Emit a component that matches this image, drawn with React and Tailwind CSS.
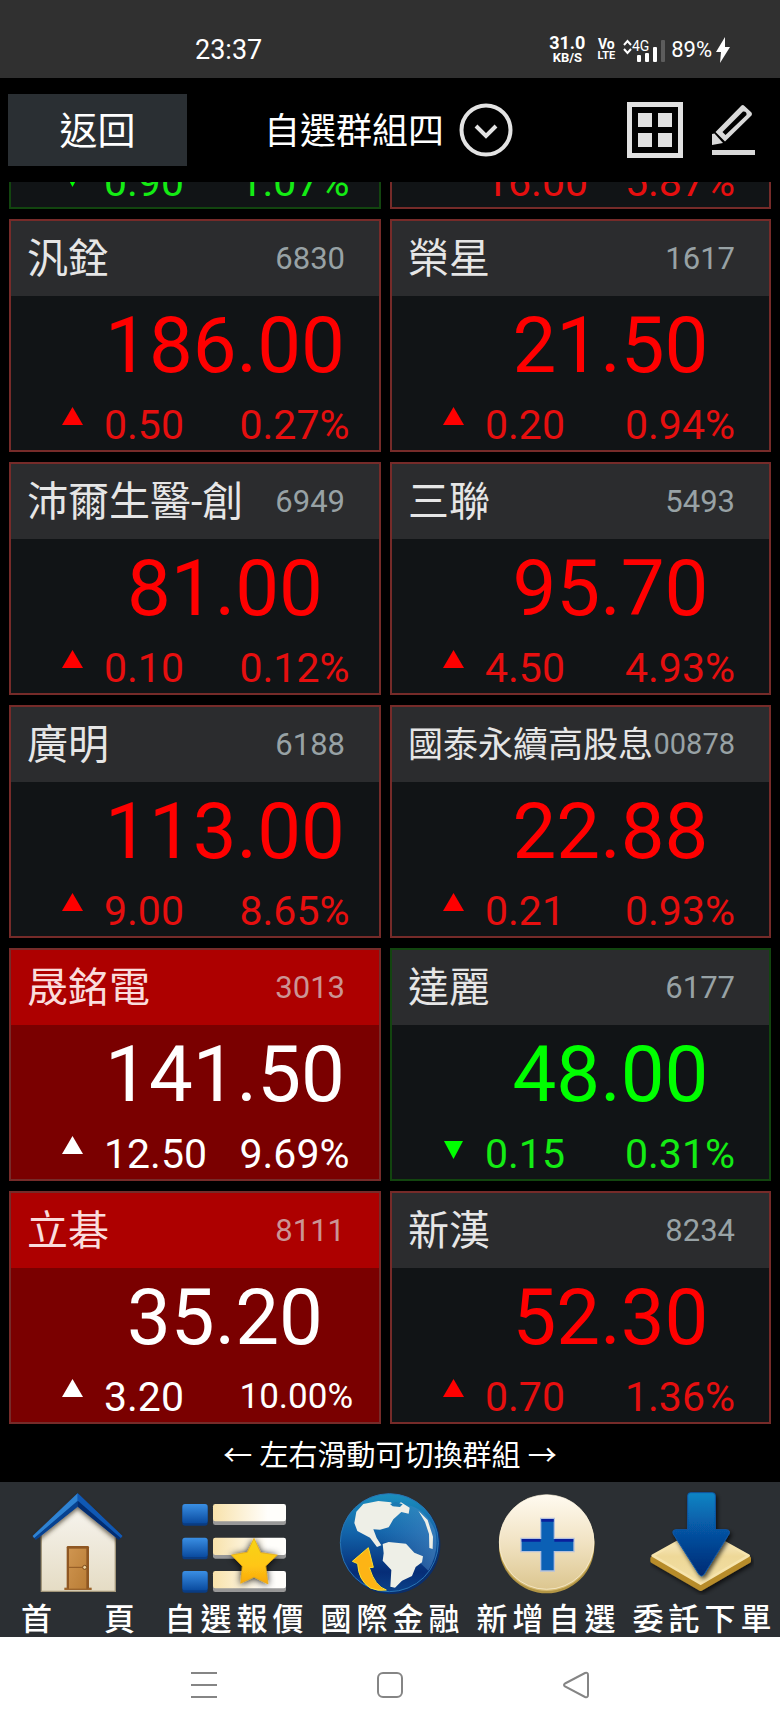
import React, { useState } from "react";
import clsx from "clsx";

// the first row is scrolled half under the header, so only its last line shows
const quotes = [
  { id: "scrolled-left", name: "", code: "", price: "", change: "0.90", percent: "1.07%", trend: "down" },
  { id: "scrolled-right", name: "", code: "", price: "", change: "16.00", percent: "5.87%", trend: "up" },
  { id: "6830", name: "汎銓", code: "6830", price: "186.00", change: "0.50", percent: "0.27%", trend: "up" },
  { id: "1617", name: "榮星", code: "1617", price: "21.50", change: "0.20", percent: "0.94%", trend: "up" },
  { id: "6949", name: "沛爾生醫-創", code: "6949", price: "81.00", change: "0.10", percent: "0.12%", trend: "up" },
  { id: "5493", name: "三聯", code: "5493", price: "95.70", change: "4.50", percent: "4.93%", trend: "up" },
  { id: "6188", name: "廣明", code: "6188", price: "113.00", change: "9.00", percent: "8.65%", trend: "up" },
  { id: "00878", name: "國泰永續高股息", code: "00878", price: "22.88", change: "0.21", percent: "0.93%", trend: "up" },
  { id: "3013", name: "晟銘電", code: "3013", price: "141.50", change: "12.50", percent: "9.69%", trend: "limit" },
  { id: "6177", name: "達麗", code: "6177", price: "48.00", change: "0.15", percent: "0.31%", trend: "down" },
  { id: "8111", name: "立碁", code: "8111", price: "35.20", change: "3.20", percent: "10.00%", trend: "limit" },
  { id: "8234", name: "新漢", code: "8234", price: "52.30", change: "0.70", percent: "1.36%", trend: "up" },
];

const trendStyles = {
  up: {
    card: "border-[#762b29] bg-[#111416]",
    head: "bg-[#2b2c2e]",
    name: "text-[#e6e6e6]",
    code: "text-[#98a2a5]",
    price: "text-[#ff0000]",
    change: "text-[#e60f0f]",
  },
  down: {
    card: "border-[#12450f] bg-[#111416]",
    head: "bg-[#2b2c2e]",
    name: "text-[#e6e6e6]",
    code: "text-[#98a2a5]",
    price: "text-[#00ff00]",
    change: "text-[#14ec14]",
  },
  limit: {
    card: "border-[#762b29] bg-[#7a0000]",
    head: "bg-[#ad0000]",
    name: "text-[#fadcdc]",
    code: "text-[#cb9494]",
    price: "text-white",
    change: "text-white",
  },
};

const Arrow = ({ down, className }) => (
  <svg viewBox="0 0 21 24" className={clsx("w-[21px] h-6", className)} fill="currentColor" aria-hidden="true">
    {down ? <path d="M1 5h19L10.5 23z" /> : <path d="M0 18h21L10.5 0z" />}
  </svg>
);

const QuoteCard = ({ quote }) => {
  const s = trendStyles[quote.trend];
  const longName = quote.name.length > 6;

  return (
    <article className={clsx("h-[233px] border-2", s.card)}>
      <div className={clsx("flex h-[75px] items-center justify-between pl-4 pr-[34px] whitespace-nowrap", s.head)}>
        <h2 className={clsx(longName ? "text-[35px]" : "text-[41px]", "pt-[2px] leading-none", s.name)}>{quote.name}</h2>
        <span className={clsx(longName ? "text-[29px]" : "text-[31px]", "leading-none", s.code)}>{quote.code}</span>
      </div>
      <p className={clsx("h-[104px] pl-[60px] text-center text-[78px] leading-[100px]", s.price)}>{quote.price}</p>
      <div className={clsx("grid h-[50px] grid-cols-[21px_1fr_1fr] items-center pl-[51px] pr-[7px]", s.change)}>
        <Arrow down={quote.trend === "down"} className={clsx("mt-[7px] self-start", s.price)} />
        <span className="pl-[21px] text-[41px] leading-[50px]">{quote.change}</span>
        <span className={clsx("pl-3 leading-[50px]", quote.percent.length > 5 ? "text-[35px]" : "text-[41px]")}>
          {quote.percent}
        </span>
      </div>
    </article>
  );
};

const StatusBar = () => (
  <div className="flex h-[78px] items-center justify-between bg-[#303030] pl-[25%] pr-[50px] pt-[22px] text-white">
    <time className="text-[27px] leading-7">23:37</time>
    <div className="flex items-center">
      <div className="flex flex-col items-center font-bold">
        <span className="text-[18px] leading-4">31.0</span>
        <span className="text-[13px] leading-[14px]">KB/S</span>
      </div>
      <div className="ml-3 flex flex-col items-center font-bold">
        <span className="text-[14px] leading-3">Vo</span>
        <span className="text-[11px] leading-3">LTE</span>
      </div>
      <svg viewBox="0 0 42 26" className="ml-2 h-[26px] w-[42px]" fill="#fff" aria-hidden="true">
        <path d="M1 8l3.5-4L8 8M1 12l3.5 4L8 12" fill="none" stroke="#fff" strokeWidth="2" />
        <text x="9" y="14" fontSize="14" fontFamily="Roboto">4G</text>
        <rect x="14" y="18" width="4" height="7" rx="1" />
        <rect x="22" y="16" width="4" height="9" rx="1" />
        <rect x="30" y="10" width="4" height="15" rx="1" />
        <rect x="38" y="3" width="4" height="22" rx="1" fill="#5c5c5c" />
      </svg>
      <span className="ml-[6px] text-[22px] leading-6">89%</span>
      <svg viewBox="0 0 14 26" className="ml-1 h-[26px] w-[14px]" fill="#fff" aria-hidden="true">
        <path d="M9 0L0 15h5L4 26l10-16H9z" />
      </svg>
    </div>
  </div>
);

const Header = ({ onToggle, open }) => (
  <header className="flex items-center bg-black py-4 pl-2 pr-[25px] text-white">
    <button type="button" className="h-[72px] w-[179px] bg-[#2a2f33] pt-[2px] text-[38px] leading-none">
      返回
    </button>
    <button
      type="button"
      className="ml-[77px] flex items-center gap-[15px] text-[36px] leading-none"
      onClick={onToggle}
      aria-expanded={open}
    >
      <span className="pt-1">自選群組四</span>
      <svg viewBox="0 0 54 54" className="h-[54px] w-[54px]" fill="none" stroke="#e3e3e3" strokeWidth="4" aria-hidden="true">
        <circle cx="27" cy="27" r="24.5" />
        <path d="M17 23l10 10 10-10" />
      </svg>
    </button>
    <div className="ml-auto flex items-center gap-7">
      <button type="button" aria-label="版面">
        <svg viewBox="0 0 56 56" className="block h-[56px] w-[56px]" fill="#e0e0e0">
          <path d="M0 0h56v56H0zM5 5v46h46V5z" fillRule="evenodd" />
          <path d="M11 11h14v14H11zM31 11h14v14H31zM11 31h14v14H11zM31 31h14v14H31z" />
        </svg>
      </button>
      <button type="button" aria-label="編輯">
        <svg viewBox="0 0 44 52" className="block h-[52px] w-[44px]" fill="#d9d9d9">
          <path d="M30.500 1.500Q32 0.500 33.500 2L40.500 8.500Q41.500 10 40.500 11.500L14 37.500L4.500 28zM32 7.500L11.500 28L14.500 31L35.500 11Q36 7 32 7.500z" fillRule="evenodd" />
          <path d="M3.500 29.500L12 39L1 41V30z" />
          <rect x="1" y="46" width="43" height="5" />
        </svg>
      </button>
    </div>
  </header>
);

const HomeIcon = () => (
  <svg viewBox="78 33 312 312" className="h-[104px] w-[104px]" aria-hidden="true">
    <defs>
      <linearGradient id="wall" x1="0" y1="0" x2="0" y2="1">
        <stop offset="0" stopColor="#f7f5f0" />
        <stop offset="1" stopColor="#e5dcc4" />
      </linearGradient>
      <linearGradient id="door" x1="0" y1="0" x2="1" y2="1">
        <stop offset="0" stopColor="#cf9550" />
        <stop offset="1" stopColor="#b97d36" />
      </linearGradient>
      <filter id="roofShadow" x="-20%" y="-20%" width="140%" height="160%">
        <feDropShadow dx="0" dy="9" stdDeviation="6" floodColor="#3a3020" floodOpacity="0.7" />
      </filter>
      <clipPath id="wallClip">
        <path d="M122 150L233 60l115 90v186H122zM80 33h310v140H80z" />
      </clipPath>
    </defs>
    <path d="M124 160L233 70l113 90v174H124z" fill="url(#wall)" stroke="#a2967a" strokeWidth="4" />
    <g clipPath="url(#wallClip)">
      <path d="M98 168L233 40l134 128-10 12L233 79 107 180z" fill="#0b4fa6" filter="url(#roofShadow)" />
    </g>
    <path d="M98 168L233 40v25L103 175z" fill="#2f83d2" />
    <path d="M103 174L233 62v18L107 180z" fill="#07418f" />
    <path d="M233 40l134 128-5 7L233 62z" fill="#1059b5" />
    <path d="M233 62l129 112-5 6L233 80z" fill="#022d72" />
    <path d="M193 323h82v7h-82z" fill="#9b642c" />
    <rect x="200" y="198" width="67" height="128" rx="4" fill="#8f5722" />
    <rect x="207" y="206" width="52" height="120" fill="url(#door)" />
    <path d="M207 262h52" stroke="#8f5722" strokeWidth="3" />
    <circle cx="254" cy="262" r="6" fill="#efd29c" stroke="#7b4918" strokeWidth="3" />
  </svg>
);

const ListIcon = () => (
  <svg viewBox="546 33 312 312" className="h-[104px] w-[104px]" aria-hidden="true">
    <defs>
      <linearGradient id="square" x1="0" y1="0" x2="0" y2="1">
        <stop offset="0" stopColor="#3a8fe4" />
        <stop offset="1" stopColor="#0a4b9f" />
      </linearGradient>
      <linearGradient id="bar">
        <stop offset="0" stopColor="#f8e2ab" />
        <stop offset="0.75" stopColor="#fffefb" />
      </linearGradient>
      <linearGradient id="star" x1="0" y1="0" x2="0" y2="1">
        <stop offset="0" stopColor="#f6d512" />
        <stop offset="0.6" stopColor="#ffc614" />
        <stop offset="1" stopColor="#f8a70d" />
      </linearGradient>
      <filter id="starShadow" x="-40%" y="-40%" width="180%" height="180%">
        <feDropShadow dx="0" dy="2" stdDeviation="11" floodColor="#000" floodOpacity="0.9" />
      </filter>
    </defs>
    {[72, 173, 273].map((y) => (
      <g key={y}>
        <rect x="547" y={y + 5} width="76" height="60" rx="8" fill="#0a3c82" />
        <rect x="547" y={y} width="76" height="58" rx="8" fill="url(#square)" />
        <rect x="639" y={y + 6} width="219" height="57" rx="7" fill="#989898" />
        <rect x="639" y={y} width="219" height="52" rx="7" fill="url(#bar)" />
      </g>
    ))}
    <path
      d="M762 175l20 43 50 7-35 33 7 54-42-21-40 19 5-51-33-34 48-8z"
      fill="url(#star)"
      stroke="#e5a712"
      strokeWidth="2"
      filter="url(#starShadow)"
    />
  </svg>
);

const GlobeIcon = () => (
  <svg viewBox="114 33 312 312" className="h-[104px] w-[104px]" aria-hidden="true">
    <defs>
      <linearGradient id="sea" x1="0" y1="0" x2="0" y2="1">
        <stop offset="0" stopColor="#1b8fbe" />
        <stop offset="0.4" stopColor="#1263a9" />
        <stop offset="0.8" stopColor="#062d77" />
        <stop offset="1" stopColor="#0b4289" />
      </linearGradient>
      <linearGradient id="glare" x1="0" y1="0" x2="1" y2="0">
        <stop offset="0" stopColor="#3d86c4" stopOpacity="0" />
        <stop offset="1" stopColor="#4d8bc6" stopOpacity="0.6" />
      </linearGradient>
    </defs>
    <circle cx="273" cy="194" r="148" fill="#0a2e6b" />
    <circle cx="268" cy="188" r="147" fill="url(#sea)" stroke="#2875b5" strokeWidth="3" />
    <path d="M218 148L310 75Q370 75 405 150 420 215 385 272 350 240 300 190L240 185z" fill="url(#glare)" />
    <path
      d="M190 72L235 63l38 4 10 12 20-12 26 16-3 18-22-5-24 22-14 24-26 7-20-1 10 26 14 22-13 5-21-28-38-20-9-24 6-34z"
      fill="#eeefe7"
    />
    <path d="M248 192l18-6 52 5 25 27 26 11-3 18-19 14-11 27-30 14-21 21-14-3 3-50-26-28 3-22z" fill="#eeefe7" />
    <path d="M355 92l28 28 16 50-1 37-10-3-1-42-12-36z" fill="#eeefe7" />
    <path d="M270 72l18-6 20 7-8 8-22-2z" fill="#1b7ab2" />
    <path
      d="M205 203l-48 41 16 7q2 50 38 73 22 10 48 6-34-11-51-67l12-1z"
      fill="#fdb415"
      stroke="#fce02c"
      strokeWidth="3"
      strokeLinejoin="round"
    />
  </svg>
);

const AddIcon = () => (
  <svg viewBox="582 33 312 312" className="h-[104px] w-[104px]" aria-hidden="true">
    <defs>
      <linearGradient id="coin" x1="0" y1="0" x2="0" y2="1">
        <stop offset="0" stopColor="#fffaf0" />
        <stop offset="0.5" stopColor="#f1e3c3" />
        <stop offset="1" stopColor="#dcc68f" />
      </linearGradient>
    </defs>
    <circle cx="740" cy="197" r="143" fill="#b39645" />
    <circle cx="740" cy="190" r="143" fill="#d5ba72" />
    <circle cx="740" cy="186" r="142" fill="url(#coin)" stroke="#fff6e0" strokeWidth="2" />
    <path
      d="M722 115h41v60h59v40h-59v58h-41v-58h-59v-40h59z"
      fill="#0b60b5"
      stroke="#b6c2dc"
      strokeWidth="4"
    />
    <path d="M724 117h37v8h-37zM665 177h57v8h-57zM763 177h57v8h-57z" fill="#0a1f9c" />
  </svg>
);

const OrderIcon = () => (
  <svg viewBox="270 273 312 312" className="h-[104px] w-[104px]" aria-hidden="true">
    <defs>
      <linearGradient id="shaft" x1="0" y1="0" x2="0" y2="1">
        <stop offset="0" stopColor="#0985c4" />
        <stop offset="0.5" stopColor="#064f9f" />
        <stop offset="1" stopColor="#042a73" />
      </linearGradient>
      <linearGradient id="plate" x1="0" y1="0" x2="0" y2="1">
        <stop offset="0" stopColor="#fff7e0" />
        <stop offset="0.5" stopColor="#eed898" />
        <stop offset="1" stopColor="#f2dfa4" />
      </linearGradient>
      <filter id="plateShadow" x="-20%" y="-20%" width="140%" height="140%">
        <feDropShadow dx="5" dy="7" stdDeviation="6" floodColor="#000" floodOpacity="0.7" />
      </filter>
    </defs>
    <g strokeLinejoin="round" strokeWidth="12">
      <path d="M277 475v8l145 84 145-84v-8L422 400z" fill="#b78c2c" stroke="#b78c2c" filter="url(#plateShadow)" />
      <path d="M278 467l144-80 144 80-144 84z" fill="url(#plate)" stroke="#f6e4ad" strokeWidth="8" />
    </g>
    <path
      d="M392 278h65q9 0 9 9v102h34q12 2 7 13l-74 120q-8 12-17 0l-76-120q-5-11 7-13h36V287q0-9 9-9z"
      fill="url(#shaft)"
      stroke="#0b56a4"
      strokeWidth="3"
      filter="url(#plateShadow)"
    />
  </svg>
);

const tabs = [
  { label: "首頁", Icon: HomeIcon },
  { label: "自選報價", Icon: ListIcon },
  { label: "國際金融", Icon: GlobeIcon },
  { label: "新增自選", Icon: AddIcon },
  { label: "委託下單", Icon: OrderIcon },
];

const TabBar = () => (
  <nav className="grid grid-cols-5 bg-[#2b2f33] pt-[9px] text-white">
    {tabs.map(({ label, Icon }) => (
      <a key={label} href="#" className="flex flex-col items-center">
        <Icon />
        <span
          className={clsx(
            "flex h-[42px] items-end text-[31px] font-medium leading-[34px]",
            label.length === 2 ? "gap-[52px]" : "gap-[5px]"
          )}
        >
          {[...label].map((char) => (
            <span key={char}>{char}</span>
          ))}
        </span>
      </a>
    ))}
  </nav>
);

const SystemNav = () => (
  <div className="flex h-[96px] items-center justify-center gap-[158px] bg-white text-[#858585]">
    <button type="button" aria-label="最近使用">
      <svg viewBox="0 0 28 28" className="block h-7 w-7" stroke="currentColor" strokeWidth="2">
        <path d="M1 2h26M1 14h26M1 26h26" />
      </svg>
    </button>
    <button type="button" aria-label="主畫面">
      <svg viewBox="0 0 28 28" className="block h-7 w-7" fill="none" stroke="currentColor" strokeWidth="2">
        <rect x="2" y="2" width="24" height="24" rx="5" />
      </svg>
    </button>
    <button type="button" aria-label="上一頁">
      <svg viewBox="0 0 28 28" className="block h-7 w-7" fill="none" stroke="currentColor" strokeWidth="2">
        <path d="M3 12.500L23 2q3-1 3 2v20q0 3-3 2L3 15.500q-2-1.500 0-3z" />
      </svg>
    </button>
  </div>
);

const App = () => {
  const [open, setOpen] = useState(false);

  return (
    <div className="bg-black font-[Roboto,'Noto_Sans_CJK_TC',sans-serif]" lang="zh-Hant">
      <StatusBar />
      <Header open={open} onToggle={() => setOpen(!open)} />
      <main className="overflow-hidden">
        <div className="-mt-[206px] grid grid-cols-[372fr_381fr] gap-x-[9px] gap-y-[10px] px-[9px]">
          {quotes.map((quote) => (
            <QuoteCard key={quote.id} quote={quote} />
          ))}
        </div>
      </main>
      <p className="h-[58px] text-center text-[29px] leading-[64px] text-white">← 左右滑動可切換群組 →</p>
      <TabBar />
      <SystemNav />
    </div>
  );
};

export default App;
